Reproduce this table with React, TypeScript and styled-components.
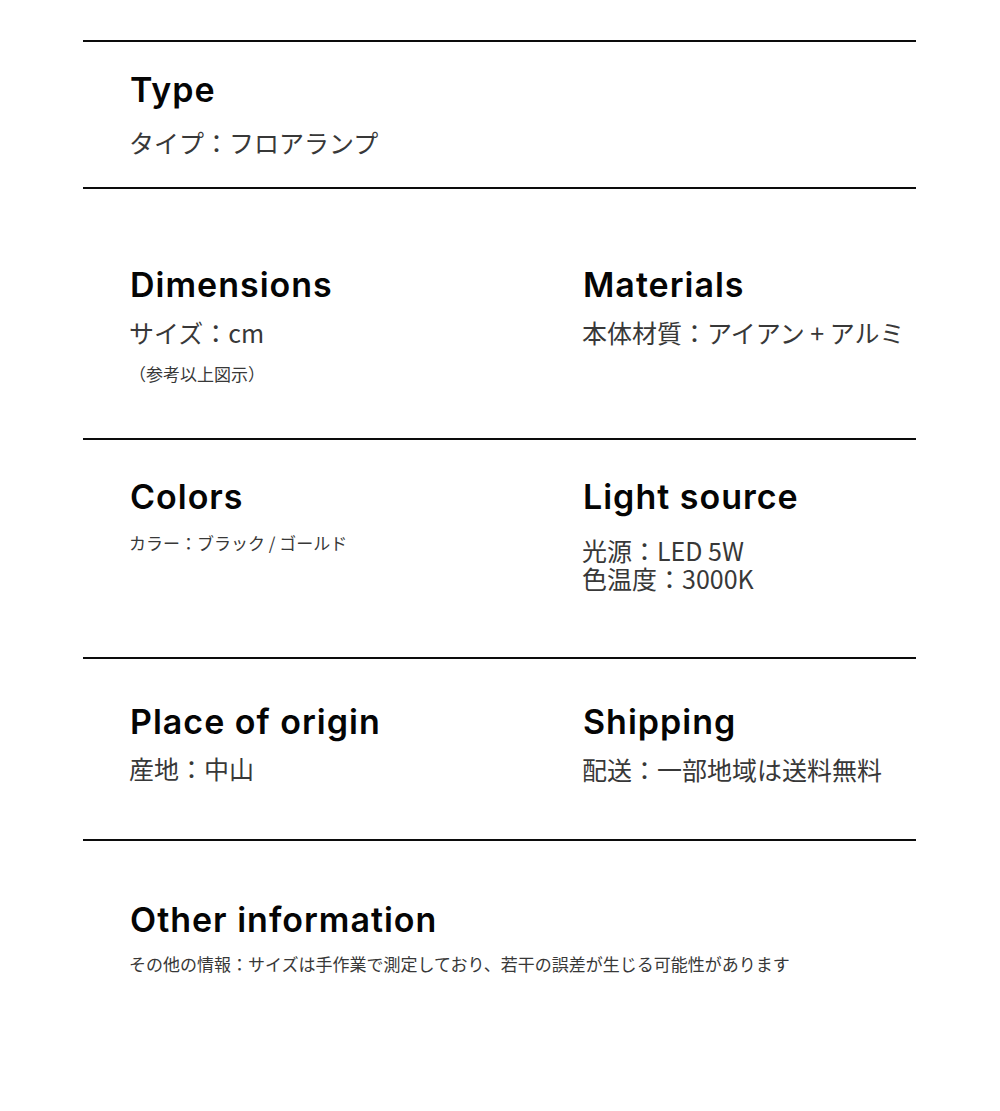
import React from 'react'
import styled, { createGlobalStyle } from 'styled-components'

const GlobalStyle = createGlobalStyle`
  html, body {
    margin: 0;
    padding: 0;
    background: #fff;
  }
  body {
    font-family: "Noto Sans CJK JP", "Noto Sans", sans-serif;
    color: #333;
  }
`

type Field = {
  title: string
  lines: { text: string; small?: boolean; top?: number }[]
  lineHeight?: number
}

type Row = {
  height: number
  pad: number
  fields: Field[]
}

const rows: Row[] = [
  {
    height: 147,
    pad: 28,
    fields: [{ title: 'Type', lines: [{ text: 'タイプ：フロアランプ', top: 17 }] }],
  },
  {
    height: 251,
    pad: 76,
    fields: [
      {
        title: 'Dimensions',
        lines: [
          { text: 'サイズ：cm', top: 12 },
          { text: '（参考以上図示）', small: true, top: 15 },
        ],
      },
      { title: 'Materials', lines: [{ text: '本体材質：アイアン + アルミ', top: 12 }] },
    ],
  },
  {
    height: 219,
    pad: 37,
    fields: [
      { title: 'Colors', lines: [{ text: 'カラー：ブラック / ゴールド', small: true, top: 14 }] },
      {
        title: 'Light source',
        lineHeight: 28,
        lines: [
          { text: '光源：LED 5W', top: 19 },
          { text: '色温度：3000K', top: 0 },
        ],
      },
    ],
  },
  {
    height: 182,
    pad: 43,
    fields: [
      { title: 'Place of origin', lines: [{ text: '産地：中山', top: 11 }] },
      { title: 'Shipping', lines: [{ text: '配送：一部地域は送料無料', top: 12 }] },
    ],
  },
  {
    height: 272,
    pad: 59,
    fields: [
      {
        title: 'Other information',
        lines: [
          {
            text: 'その他の情報：サイズは手作業で測定しており、若干の誤差が生じる可能性があります',
            small: true,
            top: 12,
          },
        ],
      },
    ],
  },
]

function App() {
  return (
    <Page>
      <GlobalStyle />
      {rows.map((row, i) => (
        <Section key={i} $height={row.height} $pad={row.pad}>
          {row.fields.map((f) => (
            <Cell key={f.title} $wide={row.fields.length === 1}>
              <Heading>{f.title}</Heading>
              {f.lines.map((l) => (
                <Value key={l.text} $small={l.small} $top={l.top ?? 12} $lh={f.lineHeight}>
                  {l.text}
                </Value>
              ))}
            </Cell>
          ))}
        </Section>
      ))}
    </Page>
  )
}

export default App

const Page = styled.div`
  width: 833px;
  margin: 40px 0 0 83px;
`

const Section = styled.section<{ $height: number; $pad: number }>`
  box-sizing: border-box;
  height: ${(p) => p.$height}px;
  border-top: 2px solid #0c0c0c;
  padding: ${(p) => p.$pad}px 0 0 47px;
  display: grid;
  grid-template-columns: 453px 1fr;
  align-items: start;
`

const Cell = styled.div<{ $wide: boolean }>`
  grid-column: ${(p) => (p.$wide ? '1 / -1' : 'auto')};
  display: flex;
  flex-direction: column;
`

const Heading = styled.h2`
  margin: 0;
  font-family: Inter, "Liberation Sans", sans-serif;
  font-weight: 600;
  font-size: 34px;
  line-height: 40px;
  color: #050505;
  letter-spacing: 1px;
`

const Value = styled.p<{ $small?: boolean; $top: number; $lh?: number }>`
  margin: ${(p) => p.$top}px 0 0 -1px;
  font-family: "Noto Sans CJK JP", "Noto Sans", sans-serif;
  font-weight: 400;
  font-size: ${(p) => (p.$small ? 17 : 25)}px;
  line-height: ${(p) => (p.$lh ? p.$lh : p.$small ? 24 : 30)}px;
  color: #383838;
  white-space: nowrap;
`
